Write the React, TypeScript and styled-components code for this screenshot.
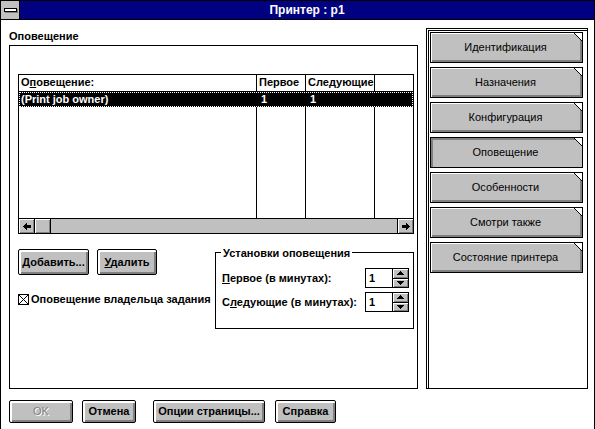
import React from 'react';
import styled, { createGlobalStyle } from 'styled-components';

const GlobalStyle = createGlobalStyle`
  html, body {
    margin: 0;
    padding: 0;
    background: #fff;
  }
  body {
    font-family: "Liberation Sans", Arial, sans-serif;
    font-size: 11px;
    color: #000;
  }
  * {
    box-sizing: border-box;
  }
`;

const Window = styled.div`
  width: 595px;
  height: 429px;
  border: 1px solid #000;
  border-bottom: none;
  background: #fff;
  display: flex;
  flex-direction: column;
  overflow: hidden;
`;

const TitleBar = styled.div`
  height: 19px;
  display: flex;
  background: #000080;
  border-bottom: 1px solid #000;
`;

const SysMenu = styled.div`
  width: 19px;
  background: #c0c0c0;
  border-right: 1px solid #000;
  display: flex;
  align-items: center;
  justify-content: center;

  span {
    width: 13px;
    height: 4px;
    background: #fff;
    border: 1px solid #000;
    box-shadow: 1px 1px 0 #808080;
  }
`;

const Title = styled.div`
  flex: 1;
  color: #fff;
  font-weight: 700;
  font-size: 12px;
  line-height: 18px;
  text-align: center;
`;

const Body = styled.div`
  padding: 8px 0 0 8px;
  display: flex;
  flex-direction: column;
`;

const MainRow = styled.div`
  display: flex;
  gap: 8px;
  height: 361px;
`;

const LeftCol = styled.div`
  width: 409px;
  display: flex;
  flex-direction: column;
`;

const SectionLabel = styled.div`
  height: 17px;
  line-height: 17px;
  font-weight: 700;
`;

const Panel = styled.div`
  flex: 1;
  border: 1px solid #000;
  padding: 28px 3px 0 8px;
  display: flex;
  flex-direction: column;
`;

const ListBox = styled.div`
  height: 160px;
  border: 1px solid #000;
  display: flex;
  flex-direction: column;
`;

const Columns = styled.div<{ $header?: boolean; $selected?: boolean; $fill?: boolean }>`
  display: grid;
  grid-template-columns: 238px 49px 69px 1fr;
  flex: ${(p) => (p.$fill ? 1 : 'none')};
  height: ${(p) => (p.$fill ? 'auto' : p.$header ? '17px' : '15px')};
  border-bottom: ${(p) => (p.$header ? '1px solid #000' : 'none')};
  background: ${(p) => (p.$selected ? '#000' : '#fff')};
  color: ${(p) => (p.$selected ? '#fff' : '#000')};
  outline: ${(p) => (p.$selected ? '1px dotted #fff' : 'none')};
  outline-offset: -1px;
  font-weight: 700;
`;

const Cell = styled.div<{ $last?: boolean; $pad?: number }>`
  border-right: ${(p) => (p.$last ? 'none' : '1px solid #000')};
  padding-left: ${(p) => p.$pad ?? 2}px;
  line-height: 15px;
  white-space: nowrap;
  overflow: hidden;
`;

const Key = styled.u`
  text-decoration: underline;
  text-underline-offset: 1px;
`;

const HScroll = styled.div`
  height: 15px;
  border-top: 1px solid #000;
  background: #c0c0c0;
  display: flex;
`;

const ScrollBtn = styled.div<{ $side: 'left' | 'right' }>`
  width: 16px;
  background: #c0c0c0;
  border-left: ${(p) => (p.$side === 'right' ? '1px solid #000' : 'none')};
  border-right: ${(p) => (p.$side === 'left' ? '1px solid #000' : 'none')};
  box-shadow: inset 1px 1px 0 #fff, inset -1px -1px 0 #808080;
  display: flex;
  align-items: center;
  justify-content: center;
`;

const Thumb = styled.div`
  width: 16px;
  border-right: 1px solid #000;
  box-shadow: inset 1px 1px 0 #fff, inset -1px -1px 0 #808080;
`;

const Track = styled.div`
  flex: 1;
`;

const Lower = styled.div`
  display: flex;
  margin-top: 15px;
  align-items: flex-start;
`;

const LowerLeft = styled.div`
  width: 197px;
  display: flex;
  flex-direction: column;
`;

const ButtonRow = styled.div`
  display: flex;
  gap: 8px;
`;

const Button = styled.button<{ $w: number; $h?: number; $ml?: number; $disabled?: boolean }>`
  width: ${(p) => p.$w}px;
  height: ${(p) => p.$h ?? 23}px;
  margin: 0 0 0 ${(p) => p.$ml ?? 0}px;
  padding: 0 0 1px;
  border: 1px solid #000;
  border-radius: 2px;
  background: #c0c0c0;
  box-shadow: inset 1px 1px 0 #fff, inset 2px 2px 0 #fff, inset -2px -2px 0 #808080;
  font-family: "Liberation Sans", Arial, sans-serif;
  font-size: 11px;
  font-weight: ${(p) => (p.$disabled ? 400 : 700)};
  color: ${(p) => (p.$disabled ? '#808080' : '#000')};
  text-shadow: ${(p) => (p.$disabled ? '1px 1px 0 #fff' : 'none')};
  cursor: default;
`;

const CheckRow = styled.div`
  display: flex;
  align-items: center;
  gap: 2px;
  margin-top: 17px;
  height: 14px;
  font-weight: 700;
  white-space: nowrap;
`;

const CheckBox = styled.span`
  width: 11px;
  height: 11px;
  border: 1px solid #000;
  background: #fff;
  display: flex;
`;

const GroupBox = styled.div`
  width: 199px;
  height: 77px;
  margin-top: 3px;
  border: 1px solid #000;
  display: flex;
  flex-direction: column;
`;

const Legend = styled.div`
  width: fit-content;
  margin: -7px 0 0 5px;
  padding: 0 2px;
  background: #fff;
  font-weight: 700;
  line-height: 14px;
`;

const SpinRow = styled.div<{ $mt: number }>`
  display: flex;
  align-items: center;
  justify-content: space-between;
  height: 20px;
  margin-top: ${(p) => p.$mt}px;
  padding: 0 4px 0 6px;
  font-weight: 700;
`;

const Spin = styled.div`
  display: flex;
  height: 20px;
  border: 1px solid #000;
`;

const SpinEdit = styled.div`
  width: 27px;
  background: #fff;
  border-right: 1px solid #000;
  padding-left: 3px;
  line-height: 18px;
  font-weight: 700;
`;

const SpinButtons = styled.div`
  width: 15px;
  display: flex;
  flex-direction: column;
`;

const SpinHalf = styled.div<{ $top?: boolean }>`
  flex: 1;
  background: #c0c0c0;
  border-bottom: ${(p) => (p.$top ? '1px solid #000' : 'none')};
  box-shadow: inset 1px 1px 0 #fff, inset -1px -1px 0 #808080;
  display: flex;
  align-items: center;
  justify-content: center;
`;

const TabPanel = styled.div`
  width: 162px;
  border: 1px solid #000;
  box-shadow: inset 1px 1px 0 #fff, inset 2px 2px 0 #000;
  padding: 3px 4px 0 3px;
  display: flex;
  flex-direction: column;
  gap: 4px;
`;

const Tab = styled.div<{ $active?: boolean }>`
  position: relative;
  height: 31px;
  border: 1px solid #000;
  background: #c0c0c0;
  box-shadow: ${(p) =>
    p.$active
      ? 'inset 2px 2px 0 #808080'
      : 'inset 1px 1px 0 #fff, inset -2px -2px 0 #808080'};
  display: flex;
  align-items: center;
  justify-content: center;
  padding: 0 2px 1px 0;
`;

const Fold = styled.svg`
  position: absolute;
  top: -1px;
  right: -1px;
`;

const ButtonBar = styled.div`
  display: flex;
  margin-top: 11px;
`;

const tabs = [
  'Идентификация',
  'Назначения',
  'Конфигурация',
  'Оповещение',
  'Особенности',
  'Смотри также',
  'Состояние принтера',
];

const ScrollArrow = ({ dir }: { dir: 'left' | 'right' }) => (
  <svg width="8" height="7" viewBox="0 0 8 7" shapeRendering="crispEdges">
    {dir === 'left' ? (
      <path d="M0 3.5 L4 0 V2 H8 V5 H4 V7 Z" fill="#000" />
    ) : (
      <path d="M8 3.5 L4 0 V2 H0 V5 H4 V7 Z" fill="#000" />
    )}
  </svg>
);

const SpinArrow = ({ up }: { up?: boolean }) => (
  <svg width="7" height="4" viewBox="0 0 7 4" shapeRendering="crispEdges">
    <path d={up ? 'M3.5 0 L7 4 H0 Z' : 'M0 0 H7 L3.5 4 Z'} fill="#000" />
  </svg>
);

const Spinner = ({ value }: { value: string }) => (
  <Spin>
    <SpinEdit>{value}</SpinEdit>
    <SpinButtons>
      <SpinHalf $top>
        <SpinArrow up />
      </SpinHalf>
      <SpinHalf>
        <SpinArrow />
      </SpinHalf>
    </SpinButtons>
  </Spin>
);

export default function App() {
  return (
    <>
      <GlobalStyle />
      <Window>
        <TitleBar>
          <SysMenu>
            <span />
          </SysMenu>
          <Title>Принтер : p1</Title>
        </TitleBar>
        <Body>
          <MainRow>
            <LeftCol>
              <SectionLabel>Оповещение</SectionLabel>
              <Panel>
                <ListBox>
                  <Columns $header>
                    <Cell>
                      О<Key>п</Key>овещение:
                    </Cell>
                    <Cell>Первое</Cell>
                    <Cell>Следующие</Cell>
                    <Cell $last />
                  </Columns>
                  <Columns $selected>
                    <Cell>(Print job owner)</Cell>
                    <Cell $pad={4}>1</Cell>
                    <Cell $pad={4}>1</Cell>
                    <Cell $last />
                  </Columns>
                  <Columns $fill>
                    <Cell />
                    <Cell />
                    <Cell />
                    <Cell $last />
                  </Columns>
                  <HScroll>
                    <ScrollBtn $side="left">
                      <ScrollArrow dir="left" />
                    </ScrollBtn>
                    <Thumb />
                    <Track />
                    <ScrollBtn $side="right">
                      <ScrollArrow dir="right" />
                    </ScrollBtn>
                  </HScroll>
                </ListBox>
                <Lower>
                  <LowerLeft>
                    <ButtonRow>
                      <Button $w={71} $h={26}>
                        <Key>Д</Key>обавить...
                      </Button>
                      <Button $w={60} $h={26}>
                        <Key>У</Key>далить
                      </Button>
                    </ButtonRow>
                    <CheckRow>
                      <CheckBox>
                        <svg width="9" height="9" viewBox="0 0 9 9" shapeRendering="crispEdges">
                          <path d="M0 0 L9 9 M9 0 L0 9" stroke="#000" strokeWidth="1" />
                        </svg>
                      </CheckBox>
                      Оповещение владельца задания
                    </CheckRow>
                  </LowerLeft>
                  <GroupBox>
                    <Legend>Установки оповещения</Legend>
                    <SpinRow $mt={8}>
                      <span>
                        <Key>П</Key>ервое (в минутах):
                      </span>
                      <Spinner value="1" />
                    </SpinRow>
                    <SpinRow $mt={4}>
                      <span>
                        С<Key>л</Key>едующие (в минутах):
                      </span>
                      <Spinner value="1" />
                    </SpinRow>
                  </GroupBox>
                </Lower>
              </Panel>
            </LeftCol>
            <TabPanel>
              {tabs.map((t) => (
                <Tab key={t} $active={t === 'Оповещение'}>
                  {t}
                  <Fold width="10" height="10" viewBox="0 0 10 10" shapeRendering="crispEdges">
                    <path d="M0.5 0.5 H9.5 V9.5 Z" fill="#fff" stroke="#000" strokeWidth="1" />
                  </Fold>
                </Tab>
              ))}
            </TabPanel>
          </MainRow>
          <ButtonBar>
            <Button $w={64} $disabled>
              OK
            </Button>
            <Button $w={54} $ml={9}>
              Отмена
            </Button>
            <Button $w={112} $ml={17}>
              Опции страницы...
            </Button>
            <Button $w={61} $ml={10}>
              Справка
            </Button>
          </ButtonBar>
        </Body>
      </Window>
    </>
  );
}
